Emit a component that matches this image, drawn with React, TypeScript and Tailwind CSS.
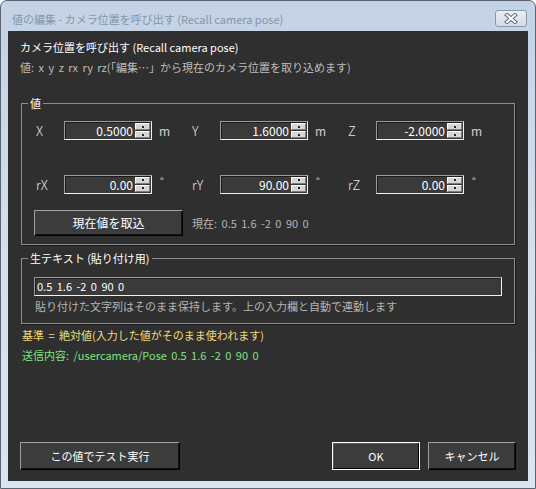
import React from "react";

function SpinButton() {
  return (
    <div className="flex flex-1 items-center justify-center border border-t-white border-l-white border-b-[#7a7a7a] border-r-[#7a7a7a] bg-[#d6d6d6]">
      <span className="h-[2px] w-[2px] bg-[#222]" />
    </div>
  );
}

function SpinInput({ value }: { value: string }) {
  return (
    <div className="flex h-[19px] w-[88px] border border-t-[#9c9c9c] border-l-[#9c9c9c] border-b-[#f2f2f2] border-r-[#f2f2f2] bg-[#3a3a3a] shadow-[inset_1px_1px_0_#1c1c1c]">
      <span className="flex-1 pr-[2px] text-right text-[12px] leading-[17px] text-white">{value}</span>
      <div className="flex w-[16px] flex-col gap-[1px] py-[1px] pr-[1px]">
        <SpinButton />
        <SpinButton />
      </div>
    </div>
  );
}

function Field({ label, value, unit }: { label: string; value: string; unit: string }) {
  return (
    <div className="flex items-center">
      <span className="w-[28px] text-[13px] font-light text-[#e6e6e6]">{label}</span>
      <SpinInput value={value} />
      <span
        className={
          unit === "m"
            ? "w-[40px] pl-[7px] text-[12px] text-[#d0d0d0]"
            : "w-[40px] self-start pl-[8px] text-[10px] leading-[11px] text-[#d0d0d0]"
        }
      >
        {unit}
      </span>
    </div>
  );
}

function GroupBox({ label, className, children }: { label: string; className?: string; children: React.ReactNode }) {
  return (
    <div className={"relative mx-[13px] border border-[#8c8c8c] shadow-[1px_1px_0_#1a1a1a] " + (className ?? "")}>
      <span className="absolute left-[6px] top-[-9px] bg-[#2f2f2f] px-[2px] text-[11px] leading-[16px] text-white">
        {label}
      </span>
      {children}
    </div>
  );
}

function Button({ children, className, primary }: { children: React.ReactNode; className?: string; primary?: boolean }) {
  return (
    <button
      className={
        "flex items-center justify-center bg-[#3c3c3c] text-white " +
        (primary
          ? "border border-white shadow-[inset_-1px_-1px_0_#000,inset_1px_1px_0_#5a5a5a] "
          : "border border-t-[#a0a0a0] border-l-[#a0a0a0] border-b-black border-r-black shadow-[inset_-1px_-1px_0_#151515] ") +
        (className ?? "")
      }
    >
      {children}
    </button>
  );
}

export default function App() {
  return (
    <div className="flex h-[489px] w-[536px] flex-col overflow-hidden rounded-t-[7px] border border-[#5b6572] bg-gradient-to-b from-[#c3d2e4] via-[#d3dfed] to-[#d9e4f1] font-['Noto_Sans_CJK_JP',sans-serif]">
      {/* Title bar */}
      <div className="flex h-[30px] shrink-0 items-start pt-[9px]">
        <span className="ml-[11px] mt-[1px] text-[11px] leading-[16px] text-[#8595aa]">
          値の編集 - カメラ位置を呼び出す (Recall camera pose)
        </span>
        <div className="ml-auto mr-[8px] flex h-[17px] w-[32px] items-center justify-center rounded-[3px] border border-[#8a98ab] bg-gradient-to-b from-[#e9eef4] to-[#d2dbe6]">
          <svg width="14" height="11" viewBox="0 0 14 11">
            <path d="M3 2 L11 9 M11 2 L3 9" stroke="#5f6b7a" strokeWidth="4" strokeLinecap="square" />
            <path d="M3 2 L11 9 M11 2 L3 9" stroke="#ffffff" strokeWidth="2" strokeLinecap="square" />
          </svg>
        </div>
      </div>

      {/* Client area */}
      <div className="mx-[7px] mb-[7px] flex flex-1 flex-col bg-[#2f2f2f] text-[11px]">
        <div className="ml-[12px] mt-[8px] leading-[16px] text-white">カメラ位置を呼び出す (Recall camera pose)</div>
        <div className="ml-[12px] mt-[4px] leading-[16px] text-[#bdbdbd] [word-spacing:2px]">
          値: x y z rx ry rz(「編集…」から現在のカメラ位置を取り込めます)
        </div>

        <GroupBox label="値" className="mt-[28px] px-[14px] pb-[8px] pt-[17px]">
          <div className="flex">
            <Field label="X" value="0.5000" unit="m" />
            <Field label="Y" value="1.6000" unit="m" />
            <Field label="Z" value="-2.0000" unit="m" />
          </div>
          <div className="mt-[34px] flex">
            <Field label="rX" value="0.00" unit="°" />
            <Field label="rY" value="90.00" unit="°" />
            <Field label="rZ" value="0.00" unit="°" />
          </div>
          <div className="-ml-[2px] mt-[16px] flex items-center">
            <Button className="h-[26px] w-[149px] text-[12px]">現在値を取込</Button>
            <span className="ml-[9px] text-[#b4b4b4] [word-spacing:2px]">現在: 0.5 1.6 -2 0 90 0</span>
          </div>
        </GroupBox>

        <GroupBox label="生テキスト (貼り付け用)" className="mt-[13px] px-[12px] pb-[9px] pt-[18px]">
          <div className="flex h-[19px] items-center border border-t-[#9c9c9c] border-l-[#9c9c9c] border-b-[#f2f2f2] border-r-[#f2f2f2] bg-[#3a3a3a] pl-[2px] text-[11px] text-white shadow-[inset_1px_1px_0_#1c1c1c] [word-spacing:2px]">
            0.5 1.6 -2 0 90 0
          </div>
          <div className="mt-[2px] pl-[1px] leading-[16px] text-[#b4b4b4]">
            貼り付けた文字列はそのまま保持します。上の入力欄と自動で連動します
          </div>
        </GroupBox>

        <div className="ml-[14px] mt-[3px] leading-[16px] text-[#eedd7a] [word-spacing:2px]">基準 = 絶対値(入力した値がそのまま使われます)</div>
        <div className="ml-[14px] mt-[4px] leading-[16px] text-[#7ee27e] [word-spacing:2px]">
          送信内容: /usercamera/Pose 0.5 1.6 -2 0 90 0
        </div>

        <div className="mb-[11px] mt-auto flex px-[12px]">
          <Button className="h-[28px] w-[160px] text-[11px]">この値でテスト実行</Button>
          <Button primary className="ml-auto h-[28px] w-[88px] text-[11px]">OK</Button>
          <Button className="ml-[8px] h-[28px] w-[88px] text-[11px]">キャンセル</Button>
        </div>
      </div>
    </div>
  );
}
